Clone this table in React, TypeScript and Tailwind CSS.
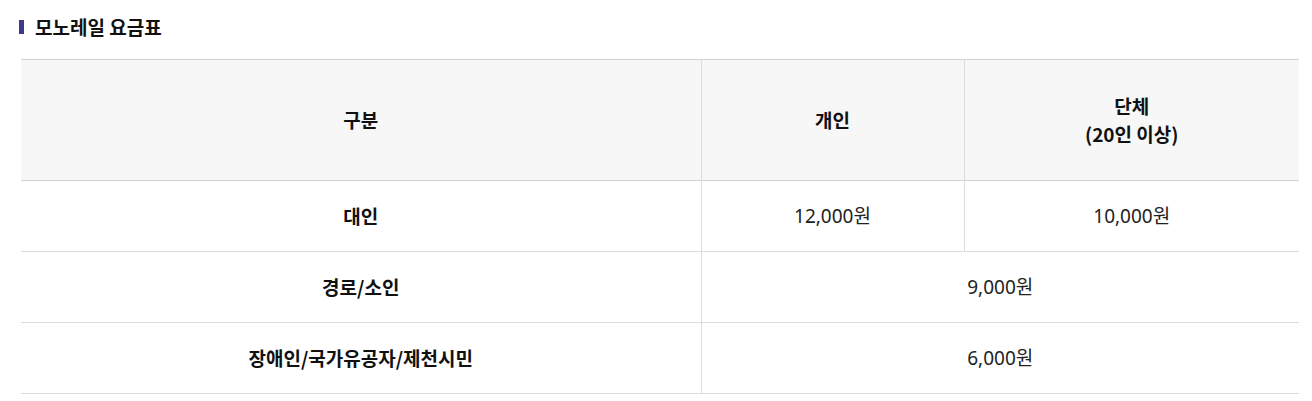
const font = {
  fontFamily: '"Noto Sans CJK KR", "Noto Sans", sans-serif',
};

const numFont = {
  fontFamily: '"Noto Sans", "Noto Sans CJK KR", sans-serif',
};

type Row = {
  label: string;
  cells: string[];
};

const rows: Row[] = [
  { label: "대인", cells: ["12,000원", "10,000원"] },
  { label: "경로/소인", cells: ["9,000원"] },
  { label: "장애인/국가유공자/제천시민", cells: ["6,000원"] },
];

export default function App() {
  return (
    <div className="bg-white w-[1312px] h-[401px] pt-[14px]" style={font}>
      {/* 타이틀 */}
      <div className="flex items-center h-[26px] pl-[19px]">
        <span className="w-[5px] h-[14px] bg-[#3d3a8a] mr-[11px]" />
        <h2 className="text-[19px] font-bold text-[#111]">모노레일 요금표</h2>
      </div>

      {/* 요금표 */}
      <table className="ml-[21px] mt-[19px] w-[1278px] border-collapse table-fixed text-[19px] text-[#222]">
        <colgroup>
          <col className="w-[680px]" />
          <col className="w-[263px]" />
          <col className="w-[335px]" />
        </colgroup>
        <thead>
          <tr className="h-[121px] bg-[#f7f7f7] border-t border-b border-[#d2d2d2]">
            <th className="font-bold text-[#111]">구분</th>
            <th className="font-bold text-[#111] border-l border-[#dcdcdc]">개인</th>
            <th className="font-bold text-[#111] border-l border-[#dcdcdc] leading-7">
              단체
              <br />
              (20인 이상)
            </th>
          </tr>
        </thead>
        <tbody>
          {rows.map((row) => (
            <tr key={row.label} className="h-[71px] border-b border-[#dcdcdc]">
              <td className="text-center font-bold text-[#111]">{row.label}</td>
              {row.cells.length === 1 ? (
                <td
                  colSpan={2}
                  className="text-center border-l border-[#dcdcdc]"
                  style={numFont}
                >
                  {row.cells[0]}
                </td>
              ) : (
                row.cells.map((c) => (
                  <td
                    key={c}
                    className="text-center border-l border-[#dcdcdc]"
                    style={numFont}
                  >
                    {c}
                  </td>
                ))
              )}
            </tr>
          ))}
        </tbody>
      </table>
    </div>
  );
}
